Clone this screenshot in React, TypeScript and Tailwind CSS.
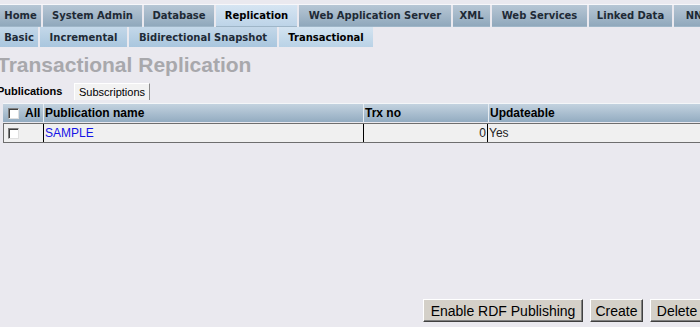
const topTabs = [
  { label: "Home", w: "w-[41px]" },
  { label: "System Admin", w: "w-[99px]" },
  { label: "Database", w: "w-[70px]" },
  { label: "Replication", w: "w-[81px]", active: true },
  { label: "Web Application Server", w: "w-[152px]" },
  { label: "XML", w: "w-[37px]" },
  { label: "Web Services", w: "w-[95px]" },
  { label: "Linked Data", w: "w-[83px]" },
  { label: "NN", w: "w-[40px]" },
];

const subTabs = [
  { label: "Basic", w: "w-[38px]" },
  { label: "Incremental", w: "w-[87px]" },
  { label: "Bidirectional Snapshot", w: "w-[148px]" },
  { label: "Transactional", w: "w-[94px]", active: true },
];

function Checkbox() {
  return (
    <span className="inline-block h-[11px] w-[11px] shrink-0 border border-t-[#808080] border-l-[#808080] border-b-[#e0e0e0] border-r-[#e0e0e0] bg-white shadow-[inset_1px_1px_0_#404040]" />
  );
}

function Button({ children, w }: { children: React.ReactNode; w: string }) {
  return (
    <button
      className={`h-[23px] shrink-0 border border-t-white border-l-white border-b-[#404040] border-r-[#404040] bg-[#d4d0c8] px-0 text-center text-[14px] leading-none text-black shadow-[inset_-1px_-1px_0_#808080] ${w}`}
    >
      {children}
    </button>
  );
}

export default function App() {
  return (
    <div className="flex h-[327px] w-[700px] flex-col overflow-hidden bg-[#eae9ef] font-['Liberation_Sans',Arial,sans-serif]">
      <div className="mt-[4px] border-t border-[#f7f7fa] font-['DejaVu_Sans',Verdana,sans-serif] text-[10px] font-bold">
        <div className="flex gap-[2px] whitespace-nowrap">
          {topTabs.map((t) => (
            <div
              key={t.label}
              className={`flex h-[22px] shrink-0 items-center justify-center border-b border-[#9fb6c8] ${t.w} ${
                t.active
                  ? "bg-gradient-to-b from-[#d6e5f2] to-[#bdd4e8] text-black"
                  : "bg-gradient-to-b from-[#b7c7d5] to-[#90a8bc] text-[#1e2a36]"
              }`}
            >
              {t.label}
            </div>
          ))}
        </div>
        <div className="flex gap-[2px] whitespace-nowrap">
          {subTabs.map((t) => (
            <div
              key={t.label}
              className={`flex h-[20px] shrink-0 items-center justify-center ${t.w} ${
                t.active
                  ? "bg-gradient-to-b from-[#d4e4f1] to-[#b9d2e6] text-black"
                  : "bg-gradient-to-b from-[#c4d8e9] to-[#a9c6de] text-[#1e2a36]"
              }`}
            >
              {t.label}
            </div>
          ))}
        </div>
      </div>

      <h1 className="ml-[-3px] mt-[5px] text-[21px] font-bold leading-[26px] text-[#a8a8ac]">
        Transactional Replication
      </h1>

      <div className="mt-[5px] flex items-end text-[11px]">
        <div className="ml-[-3px] flex h-[17px] w-[77px] items-center font-bold text-black">
          Publications
        </div>
        <div className="flex h-[17px] items-center border border-b-0 border-t-white border-l-white border-r-[#8a8a8a] bg-[#f2f2f2] px-[4px] text-black">
          Subscriptions
        </div>
      </div>

      <div className="ml-[3px] mt-[3px] text-[12px]">
        <div className="flex h-[19px] items-stretch border-t border-[#f4f6f8] bg-gradient-to-b from-[#c3d2df] to-[#93acc1] font-bold text-black">
          <div className="flex w-[40px] items-center gap-[6px] pl-[5px]">
            <Checkbox />
            <span>All</span>
          </div>
          <div className="flex w-[320px] items-center border-l border-[#e6ecf2] pl-[1px]">Publication name</div>
          <div className="flex w-[125px] items-center border-l border-[#e6ecf2] pl-[1px]">Trx no</div>
          <div className="flex flex-1 items-center border-l border-[#e6ecf2] pl-[1px]">Updateable</div>
        </div>
        <div className="mt-[1px] flex h-[20px] items-stretch border-y border-l border-t-[#6e6e6e] border-b-[#6e6e6e] border-l-[#6e6e6e] bg-[#f0f0f0] text-[12px]">
          <div className="flex w-[39px] items-center pl-[4px]">
            <Checkbox />
          </div>
          <div className="flex w-[320px] items-center border-l border-black pl-[1px] text-[#1414e6]">SAMPLE</div>
          <div className="flex w-[125px] items-center justify-end border-r border-l border-black pr-[1px] text-[#222]">0</div>
          <div className="flex flex-1 items-center pl-[1px] text-[#222]">Yes</div>
        </div>
      </div>

      <div className="mb-[5px] mr-[-4px] mt-auto flex justify-end gap-[7px]">
        <Button w="w-[160px]">Enable RDF Publishing</Button>
        <Button w="w-[53px]">Create</Button>
        <Button w="w-[54px]">Delete</Button>
      </div>
    </div>
  );
}
